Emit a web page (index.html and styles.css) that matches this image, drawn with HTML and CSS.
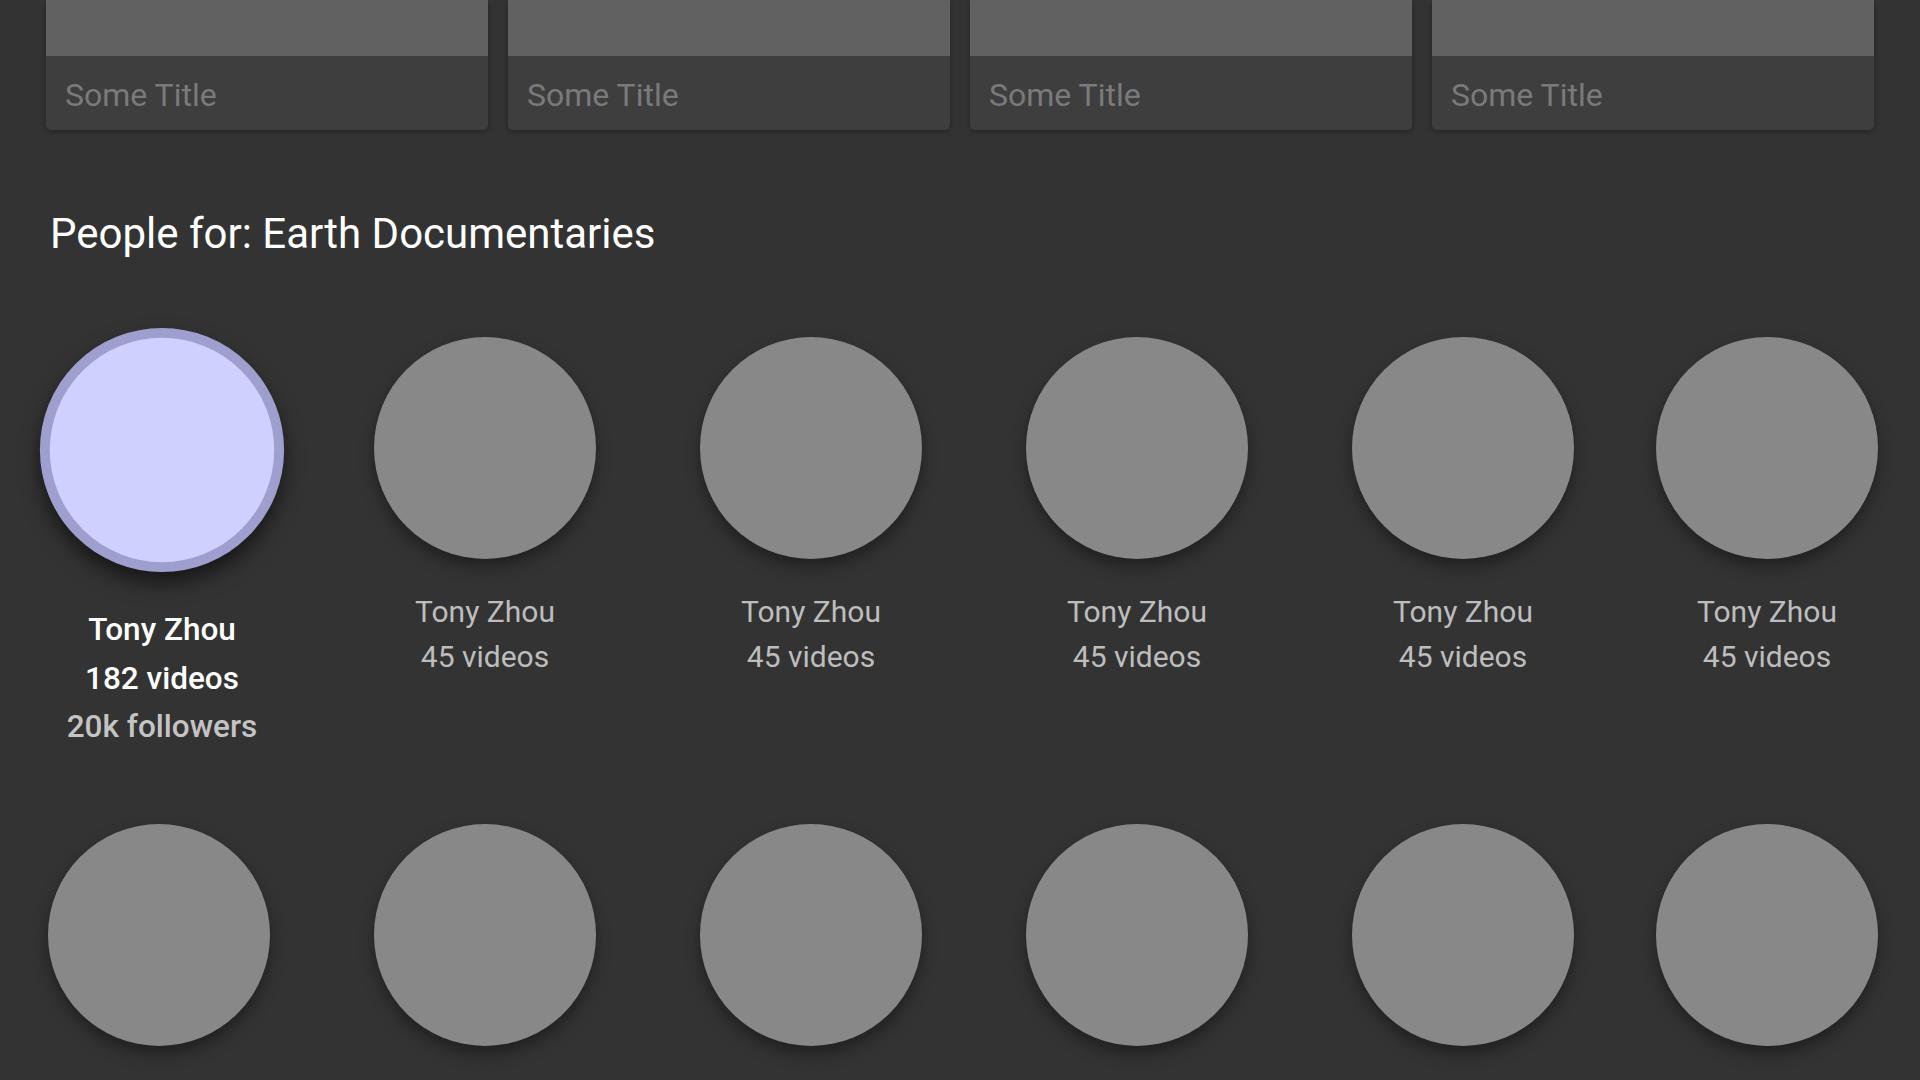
FILE: index.html
```html
<!DOCTYPE html>
<html lang="en">
<head>
<meta charset="utf-8">
<title>People for: Earth Documentaries</title>
<link rel="stylesheet" href="styles.css">
</head>
<body>
<main class="page">
  <section class="card-row">
    <article class="card"><div class="card-thumb"></div><div class="card-body">Some Title</div></article>
    <article class="card"><div class="card-thumb"></div><div class="card-body">Some Title</div></article>
    <article class="card"><div class="card-thumb"></div><div class="card-body">Some Title</div></article>
    <article class="card"><div class="card-thumb"></div><div class="card-body">Some Title</div></article>
  </section>

  <section class="people">
    <h2 class="section-title">People for: Earth Documentaries</h2>
    <div class="people-grid">
      <div class="person is-selected">
        <div class="avatar"></div>
        <div class="meta">
          <div class="name">Tony Zhou</div>
          <div class="count">182 videos</div>
          <div class="followers">20k followers</div>
        </div>
      </div>
      <div class="person"><div class="avatar"></div><div class="meta"><div class="name">Tony Zhou</div><div class="count">45 videos</div></div></div>
      <div class="person"><div class="avatar"></div><div class="meta"><div class="name">Tony Zhou</div><div class="count">45 videos</div></div></div>
      <div class="person"><div class="avatar"></div><div class="meta"><div class="name">Tony Zhou</div><div class="count">45 videos</div></div></div>
      <div class="person"><div class="avatar"></div><div class="meta"><div class="name">Tony Zhou</div><div class="count">45 videos</div></div></div>
      <div class="person"><div class="avatar"></div><div class="meta"><div class="name">Tony Zhou</div><div class="count">45 videos</div></div></div>

      <div class="person"><div class="avatar"></div></div>
      <div class="person"><div class="avatar"></div></div>
      <div class="person"><div class="avatar"></div></div>
      <div class="person"><div class="avatar"></div></div>
      <div class="person"><div class="avatar"></div></div>
      <div class="person"><div class="avatar"></div></div>
    </div>
  </section>
</main>
</body>
</html>
```

FILE: styles.css
```css
html, body {
  margin: 0;
  padding: 0;
  height: 1080px;
  overflow: hidden;
  background: #333333;
}

body {
  font-family: Roboto, "Noto Sans", "Liberation Sans", sans-serif;
  color: #bdbdbd;
}

.page {
  padding: 0 46px;
}

/* top row of video cards (scrolled partly out of view) */
.card-row {
  display: grid;
  grid-template-columns: repeat(4, 1fr);
  column-gap: 20px;
}

.card {
  background: #3e3e3e;
  border-radius: 0 0 5px 5px;
  box-shadow: 0 2px 5px rgba(0, 0, 0, 0.3);
  overflow: hidden;
}

.card-thumb {
  height: 56px;
  background: #616161;
}

.card-body {
  height: 74px;
  box-sizing: border-box;
  padding: 21px 19px 0;
  font-size: 32px;
  line-height: 37.5px;
  color: #7a7a7a;
}

/* people section */
.people {
  padding-left: 2px;
}

.section-title {
  margin: 79px 0 0 2px;
  font-size: 42px;
  font-weight: 400;
  line-height: 49px;
  color: #ffffff;
}

.people-grid {
  margin-top: 79px;
  display: grid;
  grid-template-columns: 326px 326px 326px 326px 304px 222px;
  row-gap: 72px;
  align-items: start;
}

.person {
  width: 222px;
  display: flex;
  flex-direction: column;
  align-items: center;
  text-align: center;
}

.avatar {
  width: 222px;
  height: 222px;
  border-radius: 50%;
  background: #888888;
  box-shadow: 0 8px 16px rgba(0, 0, 0, 0.38);
}

.meta {
  margin-top: 30px;
  font-size: 30px;
  line-height: 45px;
  color: #bdbdbd;
  white-space: nowrap;
}

/* focused person */
.person.is-selected {
  transform: translateX(3px);
}

.person.is-selected .avatar {
  box-sizing: border-box;
  border: 9px solid #9e9ecf;
  background: #d0d0fe;
  transform: translateY(2px) scale(1.1);
  box-shadow: 0 10px 18px rgba(0, 0, 0, 0.55);
}

.person.is-selected .meta {
  margin-top: 47px;
  font-size: 31.5px;
  line-height: 48.5px;
  font-weight: 500;
}

.person.is-selected .name,
.person.is-selected .count {
  color: #ffffff;
}

.person.is-selected .followers {
  color: #c4c4c4;
}
```
